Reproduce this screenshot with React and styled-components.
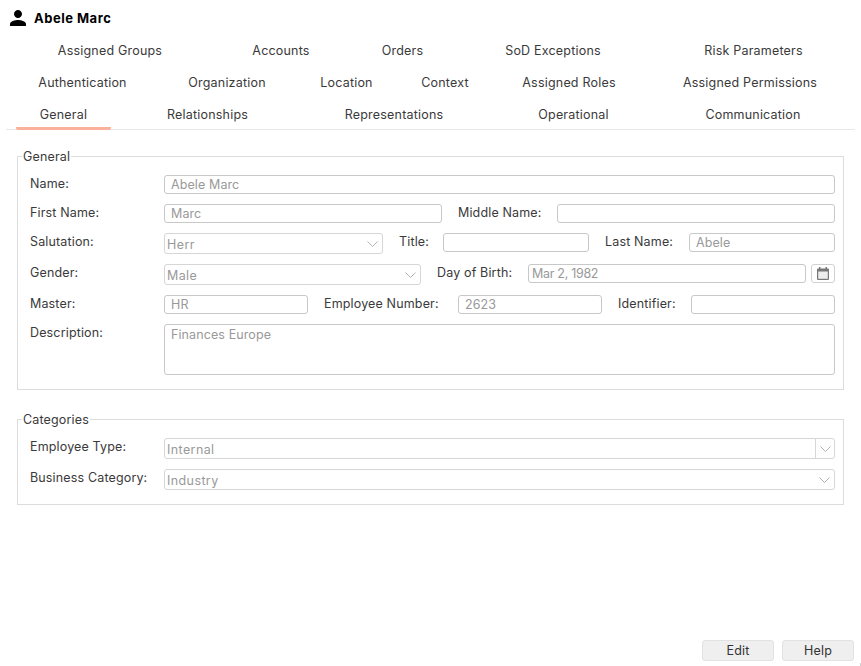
import styled, { createGlobalStyle } from 'styled-components';

const GlobalStyle = createGlobalStyle`
  html, body {
    margin: 0;
    padding: 0;
    background: #fff;
  }
  body {
    font-family: 'Inter', 'Noto Sans', sans-serif;
    font-size: 13px;
    color: #333;
  }
  * {
    box-sizing: border-box;
  }
`;

const tabRows = [
  [
    { label: 'Assigned Groups', width: 188 },
    { label: 'Accounts', width: 154 },
    { label: 'Orders', width: 89 },
    { label: 'SoD Exceptions', width: 212 },
    { label: 'Risk Parameters', width: 189 },
  ],
  [
    { label: 'Authentication', width: 133 },
    { label: 'Organization', width: 156 },
    { label: 'Location', width: 83 },
    { label: 'Context', width: 114 },
    { label: 'Assigned Roles', width: 134 },
    { label: 'Assigned Permissions', width: 196, skip: 16 },
  ],
  [
    { label: 'General', width: 95, active: true },
    { label: 'Relationships', width: 193 },
    { label: 'Representations', width: 180 },
    { label: 'Operational', width: 179 },
    { label: 'Communication', width: 180 },
  ],
];

const Page = styled.div`
  position: relative;
  display: flex;
  flex-direction: column;
  height: 666px;
  overflow: hidden;
`;

const Header = styled.header`
  display: flex;
  align-items: center;
  gap: 4px;
  height: 34px;
  padding: 2px 0 0 6px;
`;

const Title = styled.h1`
  margin: 0;
  font-size: 13px;
  font-weight: 700;
  letter-spacing: 0.5px;
  color: #000;
`;

const TabBar = styled.nav`
  width: 849px;
  margin-left: 6px;
  padding-left: 10px;
  border-bottom: 1px solid #e8e8e8;
`;

const TabRow = styled.div`
  display: flex;
  align-items: flex-start;
  height: ${p => (p.$last ? 31 : 32)}px;
`;

const Tab = styled.div`
  flex: none;
  width: ${p => p.$width}px;
  height: 32px;
  margin-left: ${p => p.$skip || 0}px;
  line-height: 34px;
  text-align: center;
  white-space: nowrap;
  font-size: 12.5px;
  letter-spacing: 0.2px;
  color: #3a3a3a;
  border-bottom: ${p => (p.$active ? '3px solid #fbb09c' : 'none')};
  border-radius: 2px;
`;

const Section = styled.fieldset`
  display: flex;
  flex-direction: column;
  min-width: 0;
  margin: ${p => p.$top}px 17px 0 17px;
  padding: 0 8px 14px 12px;
  border: 1px solid #dcdcdc;
`;

const Legend = styled.legend`
  margin-left: -8px;
  padding: 2px 1px 0;
  font-size: 12.5px;
  line-height: 16px;
  letter-spacing: 0.15px;
  color: #3a3a3a;
`;

const Row = styled.div`
  display: flex;
  align-items: flex-start;
  margin-top: 10px;
`;

const Label = styled.label`
  flex: none;
  width: ${p => p.$width || 134}px;
  margin-left: ${p => (p.$inline ? 16 : 0)}px;
  padding-top: 1px;
  font-size: 12.5px;
  line-height: 16px;
  letter-spacing: 0.15px;
  color: #3a3a3a;
  white-space: nowrap;
`;

const Field = styled.div`
  flex: ${p => (p.$width ? 'none' : 1)};
  width: ${p => (p.$width ? `${p.$width}px` : 'auto')};
  height: 19px;
  padding: 1px ${p => (p.$date ? 3 : 6)}px;
  border: 1px solid #c8c8c8;
  border-radius: 3px;
  background: #fff;
  font-size: 12.5px;
  line-height: 16px;
  letter-spacing: ${p => (p.$date ? '-0.3px' : '0.1px')};
  color: #999;
`;

const TextArea = styled(Field)`
  height: 51px;
  padding-top: 2px;
`;

const Select = styled.div`
  flex: ${p => (p.$width ? 'none' : 1)};
  display: flex;
  align-items: stretch;
  width: ${p => (p.$width ? `${p.$width}px` : 'auto')};
  height: 21px;
  border: 1px solid #d6d6d6;
  border-radius: 3px;
  background: #fff;
`;

const SelectText = styled.span`
  flex: 1;
  padding: 3px 0 0 2px;
  font-size: 12.5px;
  line-height: 16px;
  letter-spacing: 0.4px;
  color: #999;
`;

const Arrow = styled.span`
  display: flex;
  flex: none;
  align-items: center;
  justify-content: center;
  width: 19px;
  border-left: ${p => (p.$divided ? '1px solid #d6d6d6' : 'none')};
`;

const DateButton = styled.div`
  display: flex;
  flex: none;
  align-items: center;
  justify-content: center;
  width: 24px;
  height: 19px;
  margin-left: 5px;
  border: 1px solid #d2d2d2;
  border-radius: 3px;
`;

const Footer = styled.footer`
  display: flex;
  justify-content: flex-end;
  gap: 8px;
  margin-top: auto;
  padding: 0 7px 5px 0;
`;

const Button = styled.button`
  width: 72px;
  height: 21px;
  padding: 0;
  border: 1px solid #e2e2e2;
  border-radius: 3px;
  background: #efefef;
  font-family: inherit;
  font-size: 12.5px;
  letter-spacing: 0.2px;
  color: #333;
`;

// tiny resize grip in the window corner
const Grip = styled.span`
  position: absolute;
  right: 0;
  bottom: 0;
  width: 1px;
  height: 3px;
  background: #cfcfcf;
`;

const PersonIcon = () => (
  <svg width="24" height="24" viewBox="0 0 24 24" fill="#000">
    <path d="M12 12c2.21 0 4-1.79 4-4s-1.79-4-4-4-4 1.79-4 4 1.79 4 4 4zm0 2c-2.67 0-8 1.34-8 4v2h16v-2c0-2.66-5.33-4-8-4z" />
  </svg>
);

const Chevron = () => (
  <svg width="11" height="6" viewBox="0 0 11 6" fill="none" stroke="#aaa" strokeWidth="0.9">
    <path d="M0.5 0.5l5 5 5-5" />
  </svg>
);

const CalendarIcon = () => (
  <svg width="12" height="13" viewBox="0 0 12 13">
    <path d="M2 0h1.500v1.500h5V0H10v1.500h1a1 1 0 0 1 1 1V12a1 1 0 0 1-1 1H1a1 1 0 0 1-1-1V2.500a1 1 0 0 1 1-1h1z" fill="#777" />
    <rect x="1.200" y="4.500" width="9.600" height="7.300" fill="#ececec" />
  </svg>
);

const App = () => (
  <Page>
    <GlobalStyle />
    <Header>
      <PersonIcon />
      <Title>Abele Marc</Title>
    </Header>
    <TabBar>
      {tabRows.map((row, i) => (
        <TabRow key={i} $last={i === tabRows.length - 1}>
          {row.map(tab => (
            <Tab key={tab.label} $width={tab.width} $skip={tab.skip} $active={tab.active}>
              {tab.label}
            </Tab>
          ))}
        </TabRow>
      ))}
    </TabBar>
    <Section $top={17}>
      <Legend>General</Legend>
      <Row>
        <Label>Name:</Label>
        <Field>Abele Marc</Field>
      </Row>
      <Row>
        <Label>First Name:</Label>
        <Field $width={278}>Marc</Field>
        <Label $inline $width={99}>Middle Name:</Label>
        <Field />
      </Row>
      <Row>
        <Label>Salutation:</Label>
        <Select $width={219}>
          <SelectText>Herr</SelectText>
          <Arrow><Chevron /></Arrow>
        </Select>
        <Label $inline $width={44}>Title:</Label>
        <Field $width={146} />
        <Label $inline $width={84}>Last Name:</Label>
        <Field>Abele</Field>
      </Row>
      <Row>
        <Label>Gender:</Label>
        <Select $width={257}>
          <SelectText>Male</SelectText>
          <Arrow><Chevron /></Arrow>
        </Select>
        <Label $inline $width={91}>Day of Birth:</Label>
        <Field $date>Mar 2, 1982</Field>
        <DateButton><CalendarIcon /></DateButton>
      </Row>
      <Row>
        <Label>Master:</Label>
        <Field $width={144}>HR</Field>
        <Label $inline $width={134}>Employee Number:</Label>
        <Field $width={144}>2623</Field>
        <Label $inline $width={73}>Identifier:</Label>
        <Field />
      </Row>
      <Row>
        <Label>Description:</Label>
        <TextArea>Finances Europe</TextArea>
      </Row>
    </Section>
    <Section $top={20}>
      <Legend>Categories</Legend>
      <Row>
        <Label>Employee Type:</Label>
        <Select>
          <SelectText>Internal</SelectText>
          <Arrow $divided><Chevron /></Arrow>
        </Select>
      </Row>
      <Row>
        <Label>Business Category:</Label>
        <Select>
          <SelectText>Industry</SelectText>
          <Arrow><Chevron /></Arrow>
        </Select>
      </Row>
    </Section>
    <Footer>
      <Button>Edit</Button>
      <Button>Help</Button>
    </Footer>
    <Grip />
  </Page>
);

export default App;
